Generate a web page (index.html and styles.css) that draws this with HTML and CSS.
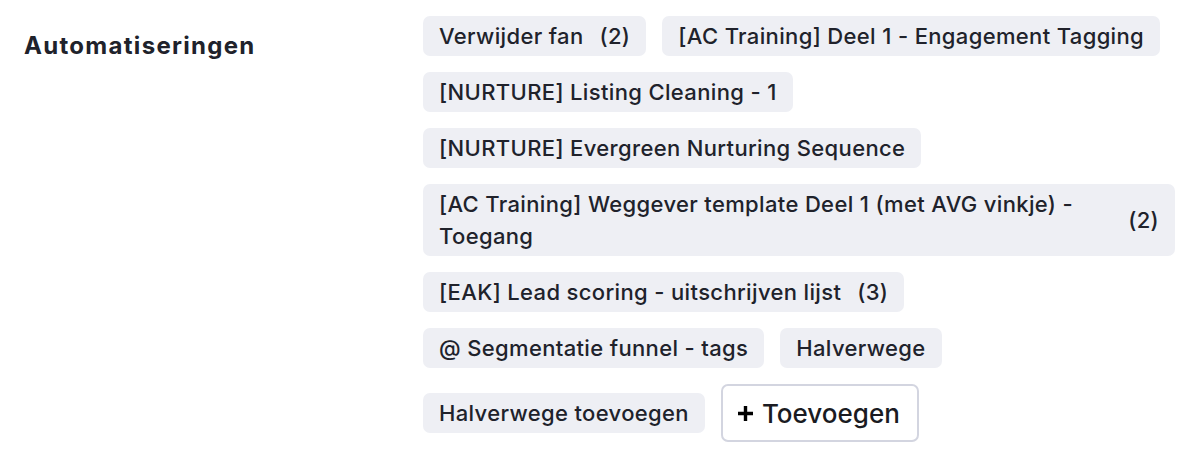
FILE: index.html
```html
<!DOCTYPE html>
<html lang="nl">
<head>
<meta charset="utf-8">
<link rel="stylesheet" href="styles.css">
</head>
<body>
<div class="field">
  <div class="label">Automatiseringen</div>
  <div class="chips">
    <span class="chip"><span class="name">Verwijder fan</span><span class="count">(2)</span></span>
    <span class="chip"><span class="name">[AC Training] Deel 1 - Engagement Tagging</span></span>
    <span class="chip"><span class="name">[NURTURE] Listing Cleaning - 1</span></span>
    <span class="chip"><span class="name">[NURTURE] Evergreen Nurturing Sequence</span></span>
    <span class="chip"><span class="name">[AC Training] Weggever template Deel 1 (met AVG vinkje) - Toegang</span><span class="count">(2)</span></span>
    <span class="chip"><span class="name">[EAK] Lead scoring - uitschrijven lijst</span><span class="count">(3)</span></span>
    <span class="chip"><span class="name">@ Segmentatie funnel - tags</span></span>
    <span class="chip"><span class="name">Halverwege</span></span>
    <span class="chip"><span class="name">Halverwege toevoegen</span></span>
    <button class="add"><svg class="plus" width="17" height="17" viewBox="0 0 17 17" aria-hidden="true"><path d="M8.5 1v15M1 8.5h15" stroke="#000" stroke-width="3.4" fill="none"/></svg>Toevoegen</button>
  </div>
</div>
</body>
</html>
```
FILE: styles.css
```css
html, body {
  margin: 0;
  padding: 0;
  background: #ffffff;
}
body {
  font-family: "Inter", "Noto Sans", sans-serif;
  color: #20222b;
}
.field {
  display: flex;
  align-items: flex-start;
  padding: 16px 23px 0 24px;
}
.label {
  width: 399px;
  flex: none;
  font-size: 24px;
  font-weight: 700;
  letter-spacing: 1.3px;
  line-height: 30px;
  padding-top: 15px;
}
.chips {
  flex: 1;
  display: flex;
  flex-wrap: wrap;
  align-items: center;
  gap: 16px 16px;
}
.chip {
  display: flex;
  align-items: center;
  background: #eeeff4;
  border-radius: 7px;
  padding: 4px 16px;
  font-size: 22px;
  font-weight: 500;
  letter-spacing: 0.35px;
  line-height: 32px;
  max-width: 100%;
  box-sizing: border-box;
}
.count {
  margin-left: 16px;
  flex: none;
}
.add {
  display: flex;
  align-items: center;
  height: 58px;
  padding: 0 17px 0 14px;
  background: #ffffff;
  border: 2px solid #d3d5e0;
  border-radius: 7px;
  font-family: inherit;
  font-size: 26px;
  font-weight: 500;
  letter-spacing: 0;
  color: #1a1b22;
}
.plus {
  flex: none;
  margin-right: 8px;
}
```
